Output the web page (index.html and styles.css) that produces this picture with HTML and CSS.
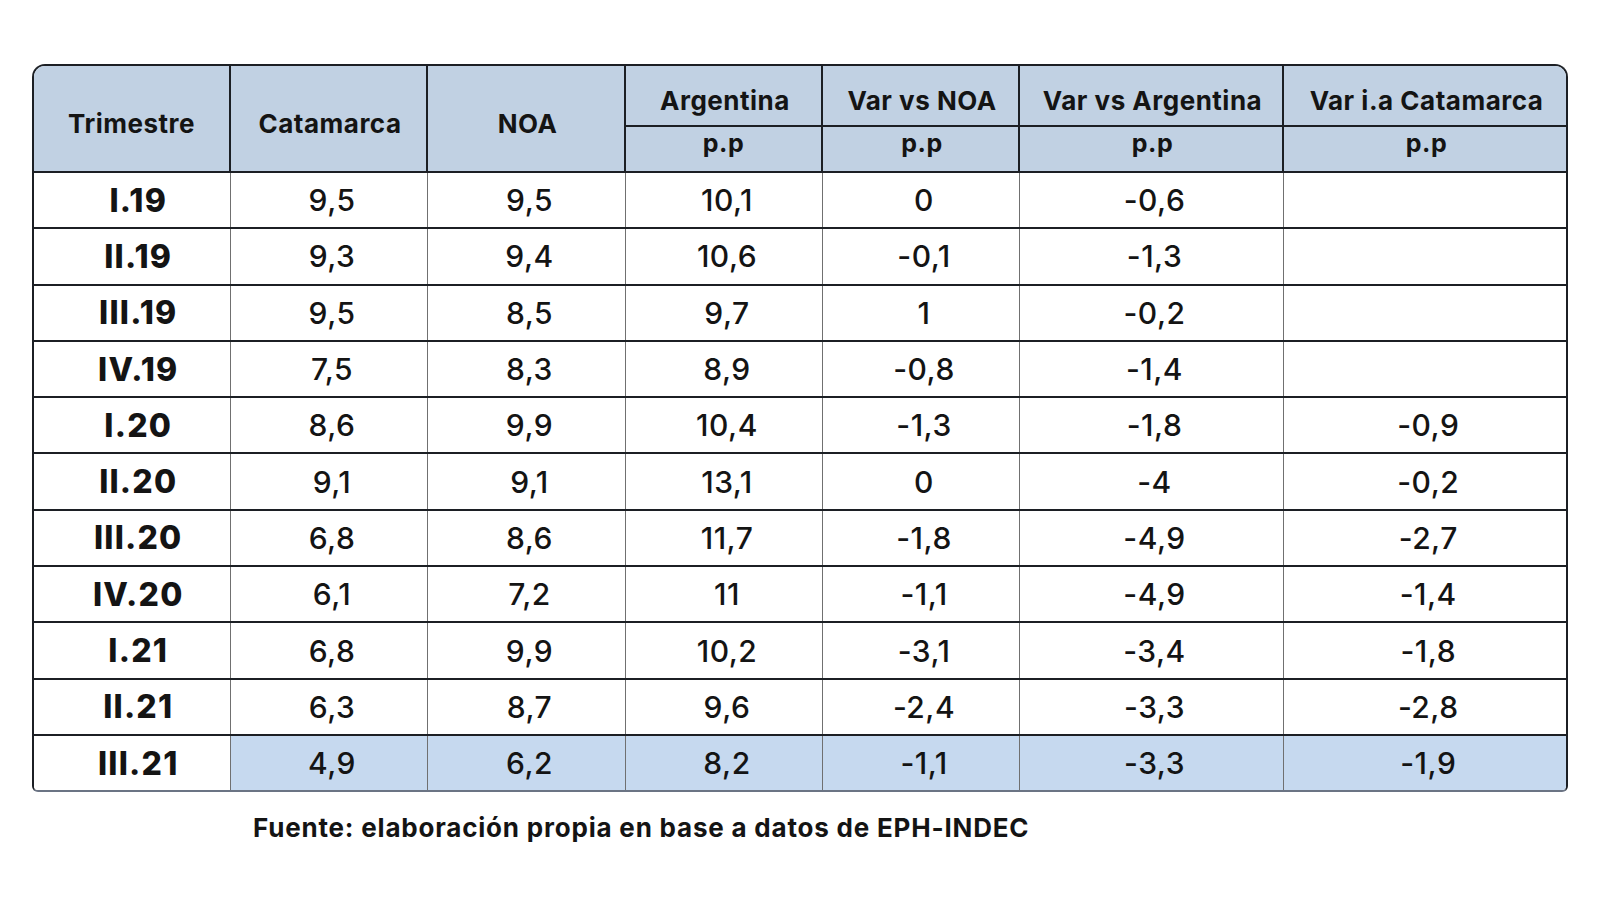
FILE: index.html
```html
<!DOCTYPE html>
<html lang="es">
<head>
<meta charset="utf-8">
<title>Tabla Catamarca</title>
<link rel="stylesheet" href="styles.css">
</head>
<body>
<main class="page">
  <div class="table-wrap">
    <table class="data">
      <colgroup>
        <col class="c1"><col class="c2"><col class="c3"><col class="c4"><col class="c5"><col class="c6"><col class="c7">
      </colgroup>
      <thead>
        <tr class="h1">
          <th rowspan="2">Trimestre</th>
          <th rowspan="2">Catamarca</th>
          <th rowspan="2">NOA</th>
          <th>Argentina</th>
          <th>Var vs NOA</th>
          <th>Var vs Argentina</th>
          <th>Var i.a Catamarca</th>
        </tr>
        <tr class="h2">
          <th class="unit">p.p</th>
          <th class="unit">p.p</th>
          <th class="unit">p.p</th>
          <th class="unit">p.p</th>
        </tr>
      </thead>
      <tbody>
        <tr><td class="q">I.19</td><td>9,5</td><td>9,5</td><td>10,1</td><td>0</td><td>-0,6</td><td></td></tr>
        <tr><td class="q">II.19</td><td>9,3</td><td>9,4</td><td>10,6</td><td>-0,1</td><td>-1,3</td><td></td></tr>
        <tr><td class="q">III.19</td><td>9,5</td><td>8,5</td><td>9,7</td><td>1</td><td>-0,2</td><td></td></tr>
        <tr><td class="q">IV.19</td><td>7,5</td><td>8,3</td><td>8,9</td><td>-0,8</td><td>-1,4</td><td></td></tr>
        <tr><td class="q">I.20</td><td>8,6</td><td>9,9</td><td>10,4</td><td>-1,3</td><td>-1,8</td><td>-0,9</td></tr>
        <tr><td class="q">II.20</td><td>9,1</td><td>9,1</td><td>13,1</td><td>0</td><td>-4</td><td>-0,2</td></tr>
        <tr><td class="q">III.20</td><td>6,8</td><td>8,6</td><td>11,7</td><td>-1,8</td><td>-4,9</td><td>-2,7</td></tr>
        <tr><td class="q">IV.20</td><td>6,1</td><td>7,2</td><td>11</td><td>-1,1</td><td>-4,9</td><td>-1,4</td></tr>
        <tr><td class="q">I.21</td><td>6,8</td><td>9,9</td><td>10,2</td><td>-3,1</td><td>-3,4</td><td>-1,8</td></tr>
        <tr><td class="q">II.21</td><td>6,3</td><td>8,7</td><td>9,6</td><td>-2,4</td><td>-3,3</td><td>-2,8</td></tr>
        <tr class="highlight"><td class="q">III.21</td><td>4,9</td><td>6,2</td><td>8,2</td><td>-1,1</td><td>-3,3</td><td>-1,9</td></tr>
      </tbody>
    </table>
  </div>
  <p class="source">Fuente: elaboración propia en base a datos de EPH-INDEC</p>
</main>
</body>
</html>
```

FILE: styles.css
```css
html, body {
  margin: 0;
  padding: 0;
  background: #ffffff;
}

body {
  font-family: "Inter", "Noto Sans", "DejaVu Sans", sans-serif;
  color: #141414;
}

.page {
  padding: 64px 0 0 32px;
  width: 1536px;
}

.table-wrap {
  width: 1536px;
  box-sizing: border-box;
  border: 2px solid #1c1f24;
  border-bottom-color: #6b7484;
  border-radius: 13px 13px 6px 6px;
  overflow: hidden;
}

.data {
  width: 100%;
  border-collapse: collapse;
  table-layout: fixed;
}

.c1 { width: 196px; }
.c2 { width: 197px; }
.c3 { width: 198px; }
.c4 { width: 197px; }
.c5 { width: 197px; }
.c6 { width: 264px; }
.c7 { width: 283px; }

.data th {
  background: #c1d1e3;
  font-weight: 700;
  font-size: 26px;
  letter-spacing: 0.5px;
  text-align: center;
  padding: 0 0 0 3px;
  border: 2px solid #1c1f24;
  border-top: none;
}

.data th:first-child { border-left: none; padding-left: 0; }
.data tr.h1 th:last-child { border-right: none; }
.data tr.h2 th:last-child { border-right: none; }

.data tr.h1 { height: 60px; }
.data tr.h1 th { padding-top: 10px; }
.data tr.h2 { height: 46px; }

.data th.unit {
  font-size: 25px;
  padding-bottom: 12px;
}

.data td {
  height: 54.3px;
  padding: 0 0 0 7px;
  text-align: center;
  font-size: 30px;
  font-weight: 500;
  letter-spacing: 0.5px;
  border-top: 2px solid #1c1f24;
  border-left: 1px solid #707070;
  border-right: 1px solid #707070;
}

.data tbody tr:first-child td { border-top: none; }
.data td:first-child { border-left: none; }
.data td:last-child { border-right: none; }

.data td.q {
  font-weight: 800;
  font-size: 32px;
  letter-spacing: 1.2px;
  padding-left: 13px;
}

.data tr.highlight td {
  background: #c6d9ef;
}

.data tr.highlight td.q {
  background: #ffffff;
}

.source {
  margin: 20px 0 0 221px;
  font-size: 26px;
  font-weight: 700;
  letter-spacing: 0.8px;
  color: #141414;
}
```
